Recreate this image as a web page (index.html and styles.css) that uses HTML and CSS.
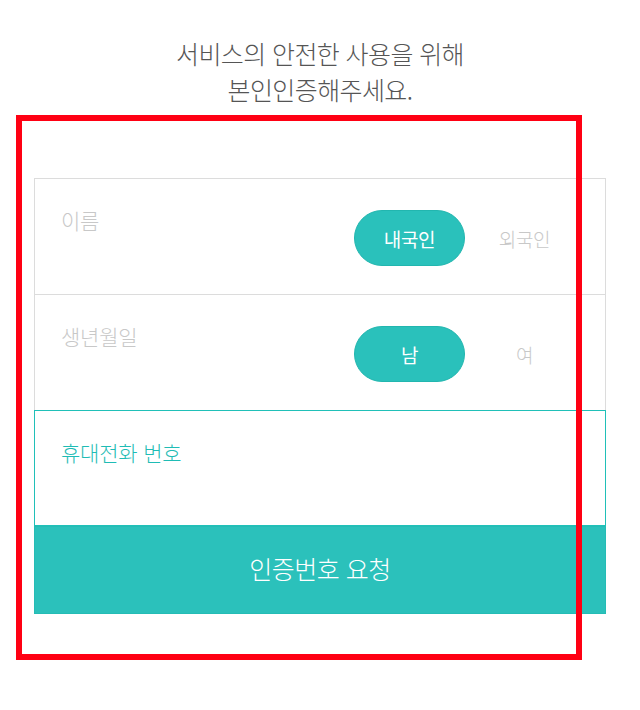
FILE: index.html
```html
<!DOCTYPE html>
<html lang="ko">
<head>
<meta charset="utf-8">
<title>본인인증</title>
<link rel="stylesheet" href="styles.css">
</head>
<body>
<main class="page">
  <h1 class="title">서비스의 안전한 사용을 위해<br>본인인증해주세요.</h1>
  <form class="form">
    <div class="row">
      <div class="field">
        <label class="label">이름</label>
        <input class="input" type="text">
      </div>
      <div class="toggle">
        <span class="opt opt-on">내국인</span>
        <span class="opt">외국인</span>
      </div>
    </div>
    <div class="row">
      <div class="field">
        <label class="label">생년월일</label>
        <input class="input" type="text">
      </div>
      <div class="toggle">
        <span class="opt opt-on">남</span>
        <span class="opt">여</span>
      </div>
    </div>
    <div class="row row-active">
      <div class="field">
        <label class="label label-active">휴대전화 번호</label>
        <input class="input" type="tel">
      </div>
    </div>
    <button class="submit" type="button">인증번호 요청</button>
  </form>
  <div class="highlight"></div>
</main>
</body>
</html>
```
FILE: styles.css
```css
html, body {
  margin: 0;
  padding: 0;
  background: #fff;
}
body {
  font-family: "Noto Sans CJK KR", "Noto Sans", sans-serif;
}
.page {
  position: relative;
  width: 640px;
  height: 710px;
  padding-top: 35px;
  box-sizing: border-box;
}
.title {
  margin: 0;
  text-align: center;
  font-size: 25px;
  line-height: 36px;
  font-weight: 300;
  color: #555;
  letter-spacing: -0.6px;
}
.form {
  margin: 71px 34px 0;
  display: flex;
  flex-direction: column;
}
.row {
  box-sizing: border-box;
  height: 116px;
  border: 1px solid #dcdcdc;
  border-bottom: none;
  display: flex;
  align-items: center;
  padding-left: 26px;
  padding-right: 25px;
}
.row-active {
  border: 1px solid #20c0b8;
}
.field {
  flex: 1;
  align-self: flex-start;
  padding-top: 27px;
  display: flex;
  flex-direction: column;
}
.label {
  font-size: 21px;
  line-height: 28px;
  font-weight: 300;
  color: #c8c8c8;
  letter-spacing: -0.2px;
}
.label-active {
  color: #1fbcb5;
}
.input {
  border: none;
  outline: none;
  background: transparent;
  height: 36px;
  padding: 0;
  margin-top: 4px;
  width: 200px;
}
.toggle {
  display: flex;
  gap: 4px;
  margin-top: 3px;
}
.opt {
  width: 111px;
  height: 56px;
  box-sizing: border-box;
  border-radius: 28px;
  display: flex;
  align-items: center;
  justify-content: center;
  font-size: 19px;
  font-weight: 300;
  color: #c8c8c8;
  letter-spacing: -0.3px;
}
.opt-on {
  background: #2ac1bb;
  border: 1px solid #22b6af;
  color: #fff;
  font-weight: 400;
}
.submit {
  height: 88px;
  border: 1px solid #25bcb5;
  background: #2bc1bb;
  color: #fff;
  font-family: inherit;
  font-size: 25px;
  font-weight: 300;
  letter-spacing: -0.5px;
  padding: 0 0 4px;
  cursor: pointer;
}
.highlight {
  position: absolute;
  left: 16px;
  top: 115px;
  width: 566px;
  height: 545px;
  box-sizing: border-box;
  border: 6px solid #ff0013;
  pointer-events: none;
}
```
